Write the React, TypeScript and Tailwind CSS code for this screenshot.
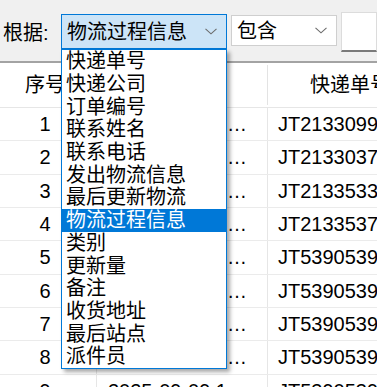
import React from "react";

const FONT = '"Liberation Sans", "Noto Sans CJK SC", sans-serif';

const items = [
  "快递单号",
  "快递公司",
  "订单编号",
  "联系姓名",
  "联系电话",
  "发出物流信息",
  "最后更新物流",
  "物流过程信息",
  "类别",
  "更新量",
  "备注",
  "收货地址",
  "最后站点",
  "派件员",
];

const rows = [
  { n: "1", d: "2025-09-08 18:21:05", c: "JT2133099912345" },
  { n: "2", d: "2025-09-08 18:21:05", c: "JT2133037125678" },
  { n: "3", d: "2025-09-08 18:21:05", c: "JT2133533812345" },
  { n: "4", d: "2025-09-08 18:21:05", c: "JT2133537812345" },
  { n: "5", d: "2025-09-08 18:21:05", c: "JT5390539712345" },
  { n: "6", d: "2025-09-08 18:21:05", c: "JT5390539712346" },
  { n: "7", d: "2025-09-08 18:21:05", c: "JT5390539712347" },
  { n: "8", d: "2025-09-08 18:21:05", c: "JT5390539712348" },
  { n: "9", d: "2025-09-09 10:12:45", c: "JT5390539712349" },
];

function Chevron() {
  return (
    <svg width="12" height="7" viewBox="0 0 12 7" className="block">
      <path d="M0.5 0.8 L6 5.8 L11.5 0.8" fill="none" stroke="#6b6b6b" strokeWidth="1.1" />
    </svg>
  );
}

export default function App() {
  return (
    <div
      className="relative w-[377px] h-[387px] overflow-hidden bg-white text-[20px] text-black leading-none"
      style={{ fontFamily: FONT }}
    >
      {/* toolbar */}
      <div className="flex items-start h-[63px] bg-[#f0f0f0] border-b-2 border-[#a3a3a3] pl-[3px]">
        <div className="w-[58px] h-[61px] flex items-center pt-[4px] shrink-0">根据:</div>
        <div className="mt-[14px] w-[166px] h-[35px] shrink-0 flex items-center justify-between bg-[#cce4f7] border border-[#0078d7] pl-[5px] pr-[9px]">
          <span className="pt-[1px]">物流过程信息</span>
          <Chevron />
        </div>
        <div className="ml-[4px] mt-[15px] w-[106px] h-[31px] shrink-0 flex items-center justify-between bg-white border border-[#cfcfcf] pl-[5px] pr-[9px]">
          <span>包含</span>
          <Chevron />
        </div>
        <div className="ml-[4px] mt-[12px] flex-1 h-[40px] bg-white border border-[#dcdcdc] border-b-2 border-b-[#7a7a7a]" />
      </div>

      {/* table */}
      <div className="flex flex-col">
        <div className="flex h-[45px] border-b border-[#e6e6e6]">
          <div className="w-[97px] shrink-0 flex items-center justify-center pr-[6px] border-r border-[#e3e3e3]">
            序号
          </div>
          <div className="w-[171px] shrink-0 border-r border-[#e3e3e3] my-[2px]" />
          <div className="w-[164px] shrink-0 flex items-center justify-center">快递单号</div>
        </div>
        {rows.map((r) => (
          <div key={r.n} className="flex h-[33.33px] border-b border-[#ebebeb] shrink-0">
            <div className="w-[97px] shrink-0 flex items-center justify-center pr-[6px] border-r border-[#e6e6e6]">
              {r.n}
            </div>
            <div className="w-[171px] shrink-0 flex items-center pl-[11px] pr-[17px] border-r border-[#e6e6e6] overflow-hidden">
              <span className="truncate block w-full">{r.d}</span>
            </div>
            <div className="w-[164px] shrink-0 flex items-center pl-[10px] whitespace-nowrap">
              {r.c}
            </div>
          </div>
        ))}
      </div>

      {/* dropdown list */}
      <div className="absolute left-[61px] top-[49px] w-[166px] bg-white border border-[#0078d7] shadow-[3px_3px_4px_rgba(0,0,0,0.35)]">
        {items.map((it) => (
          <div
            key={it}
            className={
              "h-[22.7px] flex items-center pl-[4px] whitespace-nowrap " +
              (it === "物流过程信息" ? "bg-[#0078d7] text-white" : "")
            }
          >
            {it}
          </div>
        ))}
      </div>
    </div>
  );
}
